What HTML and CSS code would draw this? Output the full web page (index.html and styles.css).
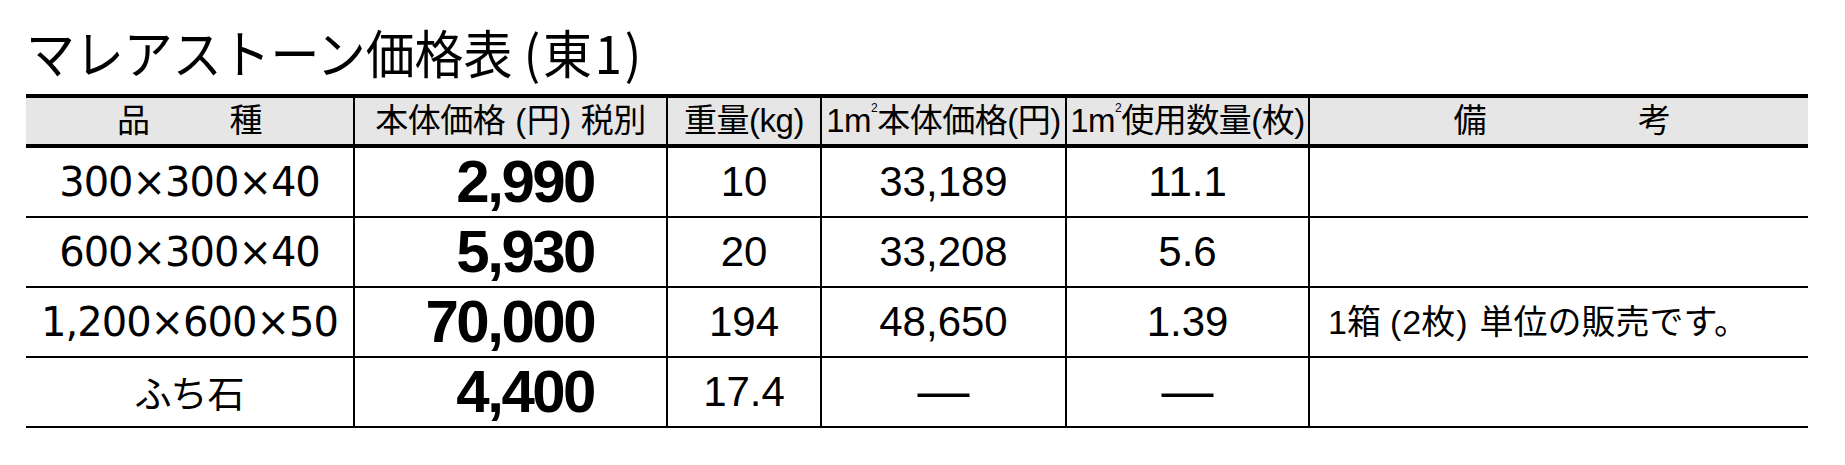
FILE: index.html
```html
<!DOCTYPE html>
<html lang="ja">
<head>
<meta charset="utf-8">
<title>マレアストーン価格表 (東1)</title>
<link rel="stylesheet" href="styles.css">
</head>
<body>
<div class="page">
  <h1 class="title"><span class="title-text">マレアストーン価格表<span class="sub">(東1)</span></span></h1>
  <table class="price">
    <colgroup>
      <col class="c1"><col class="c2"><col class="c3"><col class="c4"><col class="c5"><col class="c6">
    </colgroup>
    <thead>
      <tr>
        <th><span class="spread"><span>品</span><span>種</span></span></th>
        <th>本体価格<span class="po">(</span>円<span class="pc">)</span>税別</th>
        <th>重量(kg)</th>
        <th>1m<sup>2</sup>本体価格(円)</th>
        <th>1m<sup>2</sup>使用数量(枚)</th>
        <th><span class="spread wide"><span>備</span><span>考</span></span></th>
      </tr>
    </thead>
    <tbody>
      <tr>
        <td class="size">300×300×40</td>
        <td class="amount">2,990</td>
        <td class="num">10</td>
        <td class="num">33,189</td>
        <td class="num">11.1</td>
        <td class="note"></td>
      </tr>
      <tr>
        <td class="size">600×300×40</td>
        <td class="amount">5,930</td>
        <td class="num">20</td>
        <td class="num">33,208</td>
        <td class="num">5.6</td>
        <td class="note"></td>
      </tr>
      <tr>
        <td class="size">1,200×600×50</td>
        <td class="amount">70,000</td>
        <td class="num">194</td>
        <td class="num">48,650</td>
        <td class="num">1.39</td>
        <td class="note">1箱<span class="po">(</span>2枚<span class="pc">)</span>単位の販売です。</td>
      </tr>
      <tr>
        <td class="size jp">ふち石</td>
        <td class="amount">4,400</td>
        <td class="num">17.4</td>
        <td class="num"><span class="dash">—</span></td>
        <td class="num"><span class="dash">—</span></td>
        <td class="note"></td>
      </tr>
    </tbody>
  </table>
</div>
</body>
</html>
```

FILE: styles.css
```css
html, body {
  margin: 0;
  padding: 0;
  background: #ffffff;
  color: #000000;
}

.page {
  padding: 25px 0 0 26px;
  font-family: "Liberation Sans", "Noto Sans CJK JP", sans-serif;
}

.title {
  margin: 0 0 15px 0;
  font-family: "Noto Sans CJK JP", sans-serif;
  font-weight: 400;
  font-size: 52px;
  line-height: 54px;
  height: 54px;
}

.title-text {
  display: inline-block;
  transform: scaleX(0.94);
  transform-origin: left center;
  white-space: nowrap;
}

.title .sub {
  margin-left: 12px;
  letter-spacing: 3px;
}

.price {
  width: 1782px;
  table-layout: fixed;
  border-collapse: separate;
  border-spacing: 0;
}

.c1 { width: 327px; }
.c2 { width: 313px; }
.c3 { width: 154px; }
.c4 { width: 245px; }
.c5 { width: 243px; }
.c6 { width: 500px; }

.price th,
.price td {
  padding: 0;
  border-left: 2px solid #000;
  white-space: nowrap;
  line-height: 1;
}

.price th:first-child,
.price td:first-child {
  border-left: none;
}

.price th {
  height: 46px;
  background: #e6e6e6;
  border-top: 4px solid #000;
  border-bottom: 4px solid #000;
  font-family: "Liberation Sans", "Noto Sans CJK JP", sans-serif;
  font-weight: 400;
  font-size: 33px;
  line-height: 46px;
  text-align: center;
  letter-spacing: -0.5px;
}

.price th sup {
  font-size: 12px;
  line-height: 0;
  vertical-align: 20px;
}

.po {
  margin-left: 10px;
  margin-right: 1px;
}

.pc {
  margin-left: 1px;
  margin-right: 10px;
}

.spread {
  display: inline-flex;
  gap: 80px;
}

.spread.wide {
  gap: 152px;
  margin-left: 6px;
}

.price td {
  height: 68px;
  border-bottom: 2px solid #000;
  text-align: center;
  vertical-align: middle;
}

.size {
  font-family: "DejaVu Sans", "Noto Sans CJK JP", sans-serif;
  font-size: 40px;
  font-weight: 400;
  letter-spacing: -1px;
}

.size.jp {
  font-family: "Noto Sans CJK JP", sans-serif;
  font-size: 37px;
  letter-spacing: 0;
}

.amount {
  font-family: "Liberation Sans", sans-serif;
  font-weight: 700;
  font-size: 60px;
  letter-spacing: -2.5px;
  text-align: right !important;
  padding-right: 72px !important;
}

.num {
  font-family: "Liberation Sans", sans-serif;
  font-size: 42px;
}

.dash {
  font-family: "Liberation Sans", sans-serif;
  font-size: 52px;
  vertical-align: 6px;
}

.note {
  text-align: left !important;
  padding-left: 18px !important;
  font-family: "Liberation Sans", "Noto Sans CJK JP", sans-serif;
  font-size: 34px;
}

.note .po {
  margin-left: 9px;
}

.note .pc {
  margin-right: 12px;
}
```
